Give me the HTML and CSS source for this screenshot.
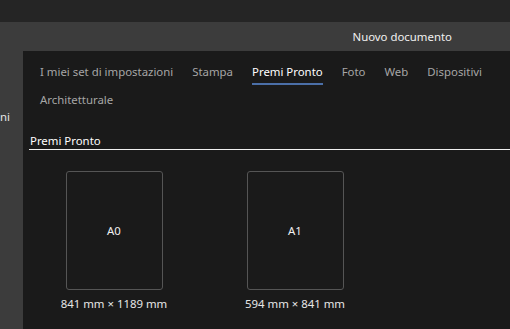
FILE: index.html
```html
<!DOCTYPE html>
<html lang="it">
<head>
    <meta charset="UTF-8">
    <meta name="viewport" content="width=device-width, initial-scale=1.0">
    <title>Nuovo documento</title>
    <link rel="stylesheet" href="styles.css">
</head>
<body>

<div class="topbar"></div>
<div class="header">
    <span class="title">Nuovo documento</span>
</div>

<div class="workspace">
    <div class="sidebar">
        <span class="side-label">ni</span>
    </div>

    <div class="main">
        <nav class="tabs">
            <span class="tab">I miei set di impostazioni</span>
            <span class="tab">Stampa</span>
            <span class="tab active">Premi Pronto</span>
            <span class="tab">Foto</span>
            <span class="tab">Web</span>
            <span class="tab">Dispositivi</span>
            <span class="tab">Architetturale</span>
        </nav>

        <h2 class="section-title">Premi Pronto</h2>

        <div class="presets">
            <div class="preset">
                <div class="sheet">A0</div>
                <div class="size">841 mm × 1189 mm</div>
            </div>
            <div class="preset">
                <div class="sheet">A1</div>
                <div class="size">594 mm × 841 mm</div>
            </div>
        </div>
    </div>
</div>

</body>
</html>
```

FILE: styles.css
```css
html, body {
    margin: 0;
    overflow: hidden;
}
body {
    width: 510px;
    height: 329px;
    background-color: #1a1a1a;
    font-family: "Noto Sans", "Open Sans", sans-serif;
    font-size: 11.4px;
    color: #e6e6e6;
}
.topbar {
    height: 22px;
    background-color: #252525;
}
.header {
    height: 29px;
    background-color: #3c3c3c;
    display: flex;
    align-items: center;
    justify-content: flex-end;
    padding-right: 58px;
}
.title {
    color: #f0f0f0;
}
.workspace {
    display: flex;
    width: 510px;
    height: 278px;
}
.sidebar {
    flex: 0 0 23px;
    background-color: #3c3c3c;
    padding-top: 58px;
    box-sizing: border-box;
    overflow: hidden;
}
.side-label {
    display: block;
    color: #e6e6e6;
}
.main {
    flex: 1 1 auto;
    min-width: 0;
    background-color: #1a1a1a;
    padding-left: 6px;
}
.tabs {
    display: flex;
    flex-wrap: wrap;
    column-gap: 19px;
    padding: 12px 0 0 11px;
}
.tab {
    height: 28px;
    line-height: 18px;
    color: #a6a6a6;
    box-sizing: border-box;
}
.tab.active {
    color: #ffffff;
    position: relative;
}
.tab.active::after {
    content: "";
    position: absolute;
    left: 0;
    right: 0;
    top: 20px;
    height: 2px;
    background-color: #4b6fa8;
}
.section-title {
    margin: 14px 0 0 0;
    font-size: 11.4px;
    font-weight: normal;
    color: #ffffff;
    line-height: 16px;
    border-bottom: 1px solid #f0f0f0;
    padding-left: 1px;
}
.presets {
    display: flex;
    gap: 61px;
    padding: 21px 0 0 25px;
}
.preset {
    display: flex;
    flex-direction: column;
    align-items: center;
    width: 120px;
}
.sheet {
    width: 97px;
    height: 119px;
    border: 1px solid #555555;
    border-radius: 3px;
    box-sizing: border-box;
    display: flex;
    align-items: center;
    justify-content: center;
    color: #f0f0f0;
}
.size {
    margin-top: 6px;
    color: #e6e6e6;
}
```
